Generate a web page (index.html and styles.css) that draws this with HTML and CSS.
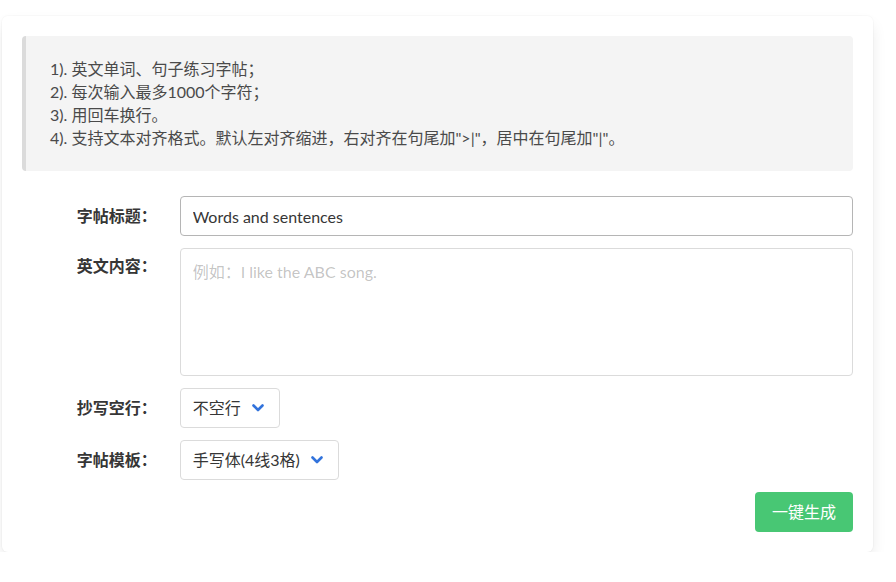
FILE: index.html
```html
<!DOCTYPE html>
<html lang="zh-CN">
<head>
<meta charset="utf-8">
<title>英文字帖</title>
<link rel="stylesheet" href="styles.css">
</head>
<body>
<div class="page">
  <div class="card">
    <div class="notes">
      <p>1). 英文单词、句子练习字帖；</p>
      <p>2). 每次输入最多1000个字符；</p>
      <p>3). 用回车换行。</p>
      <p>4). 支持文本对齐格式。默认左对齐缩进，右对齐在句尾加"&gt;|"，居中在句尾加"|"。</p>
    </div>
    <form class="form">
      <div class="field">
        <div class="field-label"><label>字帖标题：</label></div>
        <div class="field-body"><input class="input is-active" type="text" value="Words and sentences"></div>
      </div>
      <div class="field">
        <div class="field-label top"><label>英文内容：</label></div>
        <div class="field-body"><textarea class="textarea" placeholder="例如：I like the ABC song."></textarea></div>
      </div>
      <div class="field">
        <div class="field-label"><label>抄写空行：</label></div>
        <div class="field-body">
          <div class="select"><span>不空行</span><svg class="chev" width="12" height="8" viewBox="0 0 12 8"><polyline points="1.5,1.5 6,6 10.5,1.5" fill="none" stroke="#3273dc" stroke-width="2.6" stroke-linecap="round" stroke-linejoin="round"/></svg></div>
        </div>
      </div>
      <div class="field">
        <div class="field-label"><label>字帖模板：</label></div>
        <div class="field-body">
          <div class="select"><span>手写体(4线3格)</span><svg class="chev" width="12" height="8" viewBox="0 0 12 8"><polyline points="1.5,1.5 6,6 10.5,1.5" fill="none" stroke="#3273dc" stroke-width="2.6" stroke-linecap="round" stroke-linejoin="round"/></svg></div>
        </div>
      </div>
      <div class="actions">
        <button type="button" class="btn">一键生成</button>
      </div>
    </form>
  </div>
</div>
</body>
</html>
```
FILE: styles.css
```css
* { box-sizing: border-box; }
html, body { margin: 0; padding: 0; background: #fff; }
body {
  font-family: "Segoe UI", Lato, "Noto Sans CJK SC", sans-serif;
  color: #4a4a4a;
  font-size: 16px;
}
.page { padding: 16px 0 0 2px; }
.card {
  width: 871px;
  background: #fff;
  border-radius: 6px;
  box-shadow: 0 8px 16px -2px rgba(10,10,10,0.1), 0 0 0 1px rgba(10,10,10,0.02);
  padding: 20px;
}
.notes {
  background: #f4f4f4;
  border-left: 4px solid #dbdbdb;
  border-radius: 4px;
  padding: 21px 24px 22px 24px;
  margin-bottom: 25px;
}
.notes p {
  margin: 0;
  font-size: 16px;
  line-height: 23px;
  color: #4a4a4a;
}
.form { display: flex; flex-direction: column; gap: 12px; }
.field { display: flex; align-items: flex-start; }
.field-label {
  flex: 1 1 0;
  margin-right: 23px;
  text-align: right;
  padding-top: 8px;
}
.field-label.top { padding-top: 6px; }
.field-label label {
  font-weight: 700;
  font-size: 16px;
  line-height: 24px;
  color: #363636;
}
.field-body { flex: 5 1 0; display: flex; }
.input, .textarea {
  width: 100%;
  font-family: inherit;
  font-size: 16px;
  color: #363636;
  border: 1px solid #dbdbdb;
  border-radius: 4px;
  background: #fff;
  outline: none;
}
.input {
  height: 40px;
  padding: 7px 12px;
  line-height: 24px;
}
.input.is-active { border-color: #b5b5b5; }
.textarea {
  height: 128px;
  padding: 11px 12px;
  line-height: 24px;
  resize: none;
}
.textarea::placeholder { color: rgba(54,54,54,0.3); }
.select {
  display: inline-flex;
  align-items: center;
  height: 40px;
  padding: 0 15px 0 12px;
  gap: 11px;
  border: 1px solid #dbdbdb;
  border-radius: 4px;
  font-size: 16px;
  color: #363636;
  line-height: 24px;
}
.chev { display: block; }
.actions { display: flex; justify-content: flex-end; }
.btn {
  height: 40px;
  padding: 0 17px;
  background: #48c774;
  border: none;
  border-radius: 4px;
  color: #fff;
  font-family: inherit;
  font-size: 16px;
  line-height: 24px;
}
```
